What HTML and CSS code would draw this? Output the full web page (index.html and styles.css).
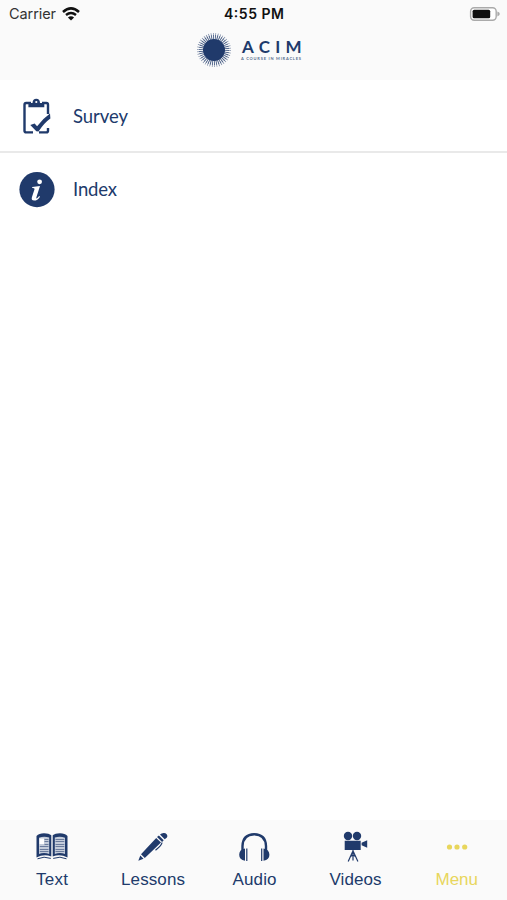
FILE: index.html
```html
<!doctype html>
<html>
<head>
<meta charset="utf-8">
<title>ACIM</title>
<link rel="stylesheet" href="styles.css">
</head>

<body>
<div class="app">
<header class="header">
	<div class="status">
		<div class="carrier">
			<svg class="carrier-name" width="47" height="20"><text x="0" y="15" textLength="47">Carrier</text></svg>
			<svg class="wifi" width="18" height="14" viewBox="0 0 18 14">
				<path d="M1 4.9Q9-2 17 4.9" stroke-width="2.6"/>
				<path d="M4 8Q9 3.8 14 8" stroke-width="2.4"/>
				<path class="fill" d="M9 13.6L5.9 10.6Q9 8 12.1 10.6z"/>
			</svg>
		</div>
		<svg class="time" width="62" height="20"><text x="0" y="15" textLength="60">4:55 PM</text></svg>
		<svg class="battery" width="32" height="14" viewBox="0 0 32 14">
			<rect class="case" x="1.6" y=".8" width="25.6" height="12.4" rx="3.6"/>
			<rect x="3.6" y="2.7" width="17.6" height="8.6" rx="1.6"/>
			<path class="cap" d="M28.4 4.6q2.4 1 2.4 2.4t-2.4 2.4z"/>
		</svg>
	</div>
	<svg class="logo" width="106" height="36" viewBox="0 0 106 36">
		<circle cx="17" cy="18" r="11"/>
		<circle class="rays" cx="17" cy="18" r="12.5" pathLength="84"/>
		<circle class="rays long" cx="17" cy="18" r="14" pathLength="84"/>
		<text class="name" x="45" y="21" textLength="59.5">ACIM</text>
		<text class="sub" x="44" y="27.5" textLength="60">A COURSE IN MIRACLES</text>
	</svg>
</header>

<ul class="list">
	<li>
		<svg class="icon" width="36" height="38" viewBox="0 0 36 38">
			<path class="line" d="M12 6H7.2Q5.5 6 5.5 7.7V33.8Q5.5 35.4 7.2 35.4H14M23 6h4.4Q29 6 29 7.7V17M29 31v2.8q0 1.6-1.6 1.6H20"/>
			<path d="M9.4 10.3V6h4.1Q13.8 1.8 17.3 1.8T21 6h4.3v4.3z"/>
			<circle class="hole" cx="17.3" cy="5" r="1.1"/>
			<path d="M11.3 27.9l4.3-1.4 2.5 2.8Q23.5 21.7 31 16.4l.4 5.2Q25.5 25.7 19.5 34.5l-2.2-.3z"/>
		</svg>
		<svg class="label" width="56" height="28"><text x="0" y="21" textLength="55">Survey</text></svg>
	</li>
	<li>
		<svg class="icon" width="36" height="38" viewBox="0 0 36 38">
			<circle cx="18" cy="18.6" r="17.6"/>
			<circle class="hole" cx="20.6" cy="10.8" r="2.4"/>
			<path class="hole" d="M13.2 15.9l7.8-1-3.6 11.3q-.4 1.5.5 1.1 1.1-.5 2.2-2.2l.9.6q-2.5 3.9-5.9 3.9-3.1-.1-2.2-3.3l2.6-8q.4-1.4-2.3-1.3z"/>
		</svg>
		<svg class="label" width="56" height="28"><text x="0" y="20" textLength="44">Index</text></svg>
	</li>
</ul>

<nav class="tabs">
	<a class="tab">
		<svg width="34" height="32" viewBox="0 0 34 32">
			<path d="M1.5 5Q4 2.2 9 2.2T16.3 4.3V25.5Q9 22.5 1.5 26.5zM17.7 4.3Q20 2.2 25 2.2T32.5 5V26.5Q25 22.5 17.7 25.5z"/>
			<path class="page" d="M4 6.8Q9 4.6 14.2 6.6V23Q9 21.2 4 23zM19.8 6.6Q25 4.6 30 6.8V23Q25 21.2 19.8 23z"/>
			<path class="rule" d="M9.5 8.5h4M9.5 10.5h4M9.5 13.5h4M4.8 15.5h8.7M4.8 18.5h8.7M4.8 20.5h8.7M20.5 8.5h8.8M20.5 10.5h8.8M20.5 13.5h8.8M20.5 15.5h8.8M20.5 18.5h8.8M20.5 20.5h8.8"/>
			<path class="hole" d="M4.5 7.5h4.5v5.5H4.5z"/>
			<path class="edge" d="M2.5 27.8Q9 24.8 15.8 27.4M18.2 27.4Q25 24.8 31.5 27.8"/>
		</svg>
		<svg class="label" width="34" height="24"><text x="1" y="18" textLength="32">Text</text></svg>
	</a>
	<a class="tab">
		<svg width="34" height="32" viewBox="0 0 34 32">
			<path d="M2.3 29.8L4.3 24.4 7.5 27.7zM5 23.2L20.2 6.9 25 11.6 8.8 26.9zM21 6l1.9-1.5 4.8 4.8-1.6 1.8zM24 3.6q1.7-1.9 4-1.7 3.2.2 3.4 3.4 0 1.7-2.7 3z"/>
			<path class="line thin" d="M26 11.5Q26 14 19.5 19.3"/>
		</svg>
		<svg class="label" width="66" height="24"><text x="1" y="18" textLength="64">Lessons</text></svg>
	</a>
	<a class="tab">
		<svg width="34" height="32" viewBox="0 0 34 32">
			<path class="line" d="M5.5 19.5V15Q6 3.5 17.2 3.3 28.5 3.5 29 15v4.5"/>
			<path d="M8 17.5v12.3Q2.2 29 2.2 23.8T8 17.5zM26.5 17.5v12.3Q32.4 29 32.4 23.8T26.5 17.5z"/>
			<path class="line thin" d="M9.8 17.5V30M24.7 17.5V30"/>
		</svg>
		<svg class="label" width="46" height="24"><text x="1.5" y="18" textLength="44">Audio</text></svg>
	</a>
	<a class="tab">
		<svg width="34" height="32" viewBox="0 0 34 32">
			<circle cx="10" cy="5" r="4.2"/>
			<circle cx="19" cy="5" r="4.2"/>
			<path d="M6.7 9.8h16v9.2h-16zM23.6 11.8L29.2 9.2v7.6l-5.6-2.5z"/>
			<path class="line thin" d="M15 19v10.5M14.7 20.5l-4.5 10M15.3 20.5l4.6 10M12 25.8l3-1.8 3 1.8"/>
		</svg>
		<svg class="label" width="54" height="24"><text x="1.5" y="18" textLength="52">Videos</text></svg>
	</a>
	<a class="tab active">
		<svg width="34" height="32" viewBox="0 0 34 32">
			<circle cx="10.5" cy="16" r="2.6"/>
			<circle cx="18" cy="16" r="2.6"/>
			<circle cx="25.7" cy="16" r="2.6"/>
		</svg>
		<svg class="label" width="46" height="24"><text x="2.5" y="18" textLength="42.5">Menu</text></svg>
	</a>
</nav>
</div>
</body>
</html>
```
FILE: styles.css
```css
*{margin:0; padding:0; box-sizing:border-box;}
body{background:#fff; font-family:Lato,sans-serif;}
li{list-style:none;}
svg{display:block; fill:currentColor; flex:none;}
.app{display:flex; flex-direction:column; height:900px; color:#203a6b;}
.header{height:80px; background:#fafafa;}
.status{display:grid; grid-template-columns:1fr 62px 1fr; align-items:center; height:28px; padding:0 6px 0 9px; color:#111; font-family:Inter,sans-serif; font-size:14px;}
.carrier{display:flex; align-items:center; gap:6px;}
.carrier-name{color:#333; font-size:14.5px;}
.wifi{fill:none; stroke:#111;}
.wifi .fill{fill:#111; stroke:none;}
.time{font-weight:600;}
.battery{justify-self:end;}
.battery .case{fill:#fff; stroke:#aaa; stroke-width:1.4;}
.battery .cap{fill:#aaa;}
.logo{margin:4px 0 0 197px;}
.rays{fill:none; stroke:#203a6b; stroke-width:5; stroke-dasharray:1 1; opacity:.6;}
.rays.long{stroke-width:6; stroke-dasharray:.6 1.4; stroke-dashoffset:-.2;}
.name{font-size:17px; font-weight:700;}
.sub{font-size:4px; font-weight:700; opacity:.75;}

.list{flex:1;}
.list li{display:flex; align-items:center; gap:18px; height:73px; padding-left:19px;}
.list li:first-child{border-bottom:2px solid #e9e9e9;}
.list .label{font-size:18.5px; font-weight:400;}
.line{fill:none; stroke:currentColor; stroke-width:2.4;}
.thin{stroke-width:1.2;}
.hole{fill:#fff;}

.tabs{display:grid; grid-template-columns:repeat(5,1fr); height:80px; padding:11px 0 0 1px; background:#fafafa;}
.tab{display:flex; flex-direction:column; align-items:center; gap:4px;}
.tab .label{font-family:"Liberation Sans",Arial,sans-serif; font-size:17px;}
.tab.active{color:#e8d65c;}
.page{fill:#c4ccda;}
.rule{stroke:#6b7c9d; stroke-width:1;}
.edge{fill:none; stroke:#203a6b; stroke-width:1;}
```
